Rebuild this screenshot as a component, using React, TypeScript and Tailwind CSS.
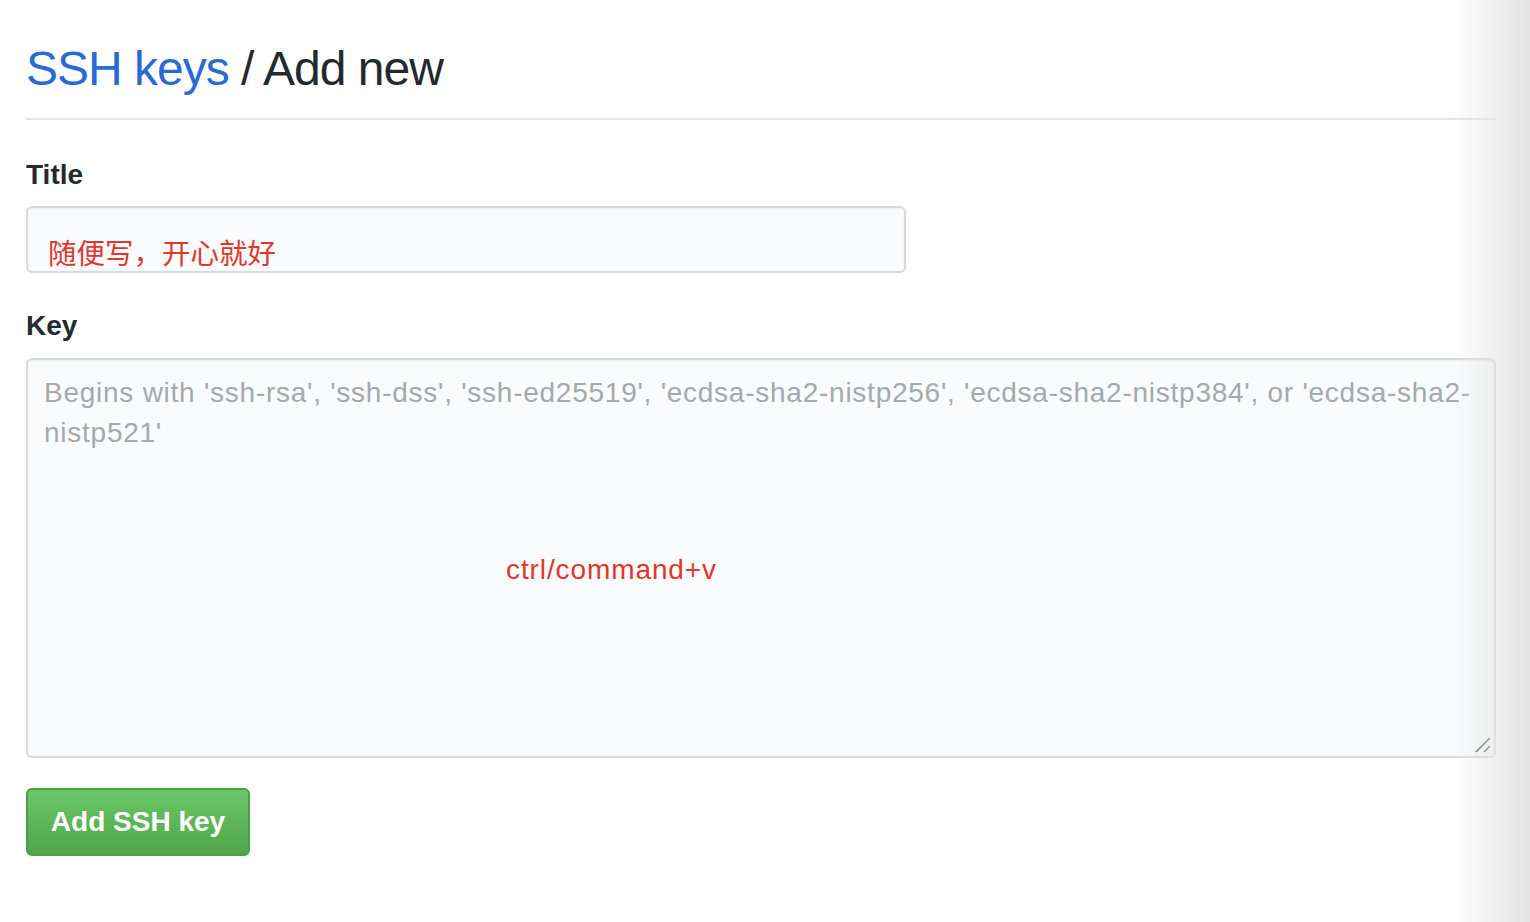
const App = () => {
  return (
    <div className="relative min-h-[922px] w-full overflow-hidden bg-white font-['Liberation_Sans',Arial,sans-serif] text-[#24292e]">
      <div className="w-[1470px] ml-[26px] pt-[39px]">
        {/* Page heading */}
        <div className="border-b-2 border-[#e1e4e8] pb-[19px]">
          <h1 className="text-[48px] leading-[60px] font-normal tracking-[-1px]">
            <a className="text-[#2a6ad3]">SSH keys</a> / Add new
          </h1>
        </div>

        {/* Title field */}
        <div className="mt-[37px]">
          <label className="block text-[28px] leading-[36px] font-bold">Title</label>
          <div className="mt-[13px] w-[880px] h-[67px] rounded-[6px] border-2 border-[#d6d9dd] bg-[#fafbfc] shadow-[inset_0_1px_2px_rgba(27,31,35,0.075)] pl-[20px] pt-[30px]">
            <span className="block text-[28.5px] leading-[28px] text-[#e0372c] font-['Noto_Sans_CJK_SC',sans-serif]">
              随便写，开心就好
            </span>
          </div>
        </div>

        {/* Key field */}
        <div className="mt-[35px]">
          <label className="block text-[28px] leading-[36px] font-bold">Key</label>
          <div className="relative mt-[14px] h-[400px] rounded-[6px] border-2 border-[#d6d9dd] bg-[#fafbfc] shadow-[inset_0_1px_2px_rgba(27,31,35,0.075)] px-[16px] pt-[13px]">
            <p className="text-[28px] leading-[40px] tracking-[0.75px] text-[#a5a9ad]">
              Begins with 'ssh-rsa', 'ssh-dss', 'ssh-ed25519', 'ecdsa-sha2-nistp256', 'ecdsa-sha2-nistp384', or 'ecdsa-sha2-
              <br />
              nistp521'
            </p>
            <span className="absolute left-[478px] top-[190px] text-[28px] leading-[40px] tracking-[0.9px] text-[#e0372c]">
              ctrl/command+v
            </span>
            <svg className="absolute right-[2px] bottom-[2px]" width="17" height="17" viewBox="0 0 17 17">
              <path d="M1 15 L15 1" stroke="#555" strokeWidth="1.6" />
              <path d="M9 15 L15 9" stroke="#555" strokeWidth="1.6" />
            </svg>
          </div>
        </div>

        {/* Submit */}
        <button className="mt-[30px] w-[224px] h-[68px] rounded-[6px] border-2 border-[#4a9f47] bg-linear-to-b from-[#6bc768] to-[#4fa64c] text-white text-[28px] font-bold">
          Add SSH key
        </button>
      </div>

      {/* right edge shadow */}
      <div className="pointer-events-none absolute right-0 top-0 h-full w-[78px] bg-linear-to-r from-white/0 to-[#e3e3e3]" />
    </div>
  );
};

export default App;
